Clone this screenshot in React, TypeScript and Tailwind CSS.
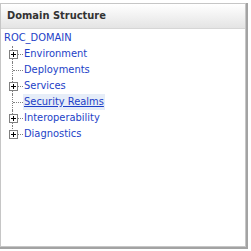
import React from 'react'

const items = [
  { label: 'Environment', expandable: true },
  { label: 'Deployments', expandable: false },
  { label: 'Services', expandable: true },
  { label: 'Security Realms', expandable: false, selected: true },
  { label: 'Interoperability', expandable: true },
  { label: 'Diagnostics', expandable: true },
]

const PlusBox = () => (
  <span className="absolute left-[8px] top-[4px] w-[9px] h-[9px] bg-white border border-[#808080] flex items-center justify-center">
    <span className="absolute w-[5px] h-px bg-black" />
    <span className="absolute h-[5px] w-px bg-black" />
  </span>
)

const App = () => {
  return (
    <div className="w-[251px] h-[251px] bg-white pt-[3px]" style={{ fontFamily: '"DejaVu Sans Condensed", "DejaVu Sans", sans-serif' }}>
      <div className="w-[248px] h-[246px] border-r-2 border-b-2 border-[#a3a3a3]">
        <div className="w-[246px] h-[244px] border border-[#c6c6c6] flex flex-col">
          {/* Header */}
          <div className="h-[25px] bg-gradient-to-b from-white to-[#e4e4e4] border-b border-[#d6d6d6] flex items-center pl-[6px]">
            <span className="text-[11px] font-bold text-[#333333]">Domain Structure</span>
          </div>

          {/* Tree */}
          <div className="pt-[1px] text-[11px] leading-[16px]">
            <div className="pl-[3px] h-[16px] text-[#1d3fc7]">ROC_DOMAIN</div>
            {items.map((item, i) => {
              const last = i === items.length - 1
              return (
                <div key={item.label} className="flex h-[16px] items-center">
                  <div className="relative w-[22px] h-[16px] shrink-0">
                    <span
                      className={`absolute left-[11px] top-0 border-l border-dotted border-[#808080] ${last ? 'h-[9px]' : 'h-[16px]'}`}
                    />
                    <span className="absolute left-[12px] top-[8px] w-[10px] border-t border-dotted border-[#808080]" />
                    {item.expandable && <PlusBox />}
                  </div>
                  <span
                    className={`text-[#1d3fc7] px-px ${item.selected ? 'bg-[#e6edf8] underline' : ''}`}
                  >
                    {item.label}
                  </span>
                </div>
              )
            })}
          </div>
        </div>
      </div>
    </div>
  )
}

export default App
